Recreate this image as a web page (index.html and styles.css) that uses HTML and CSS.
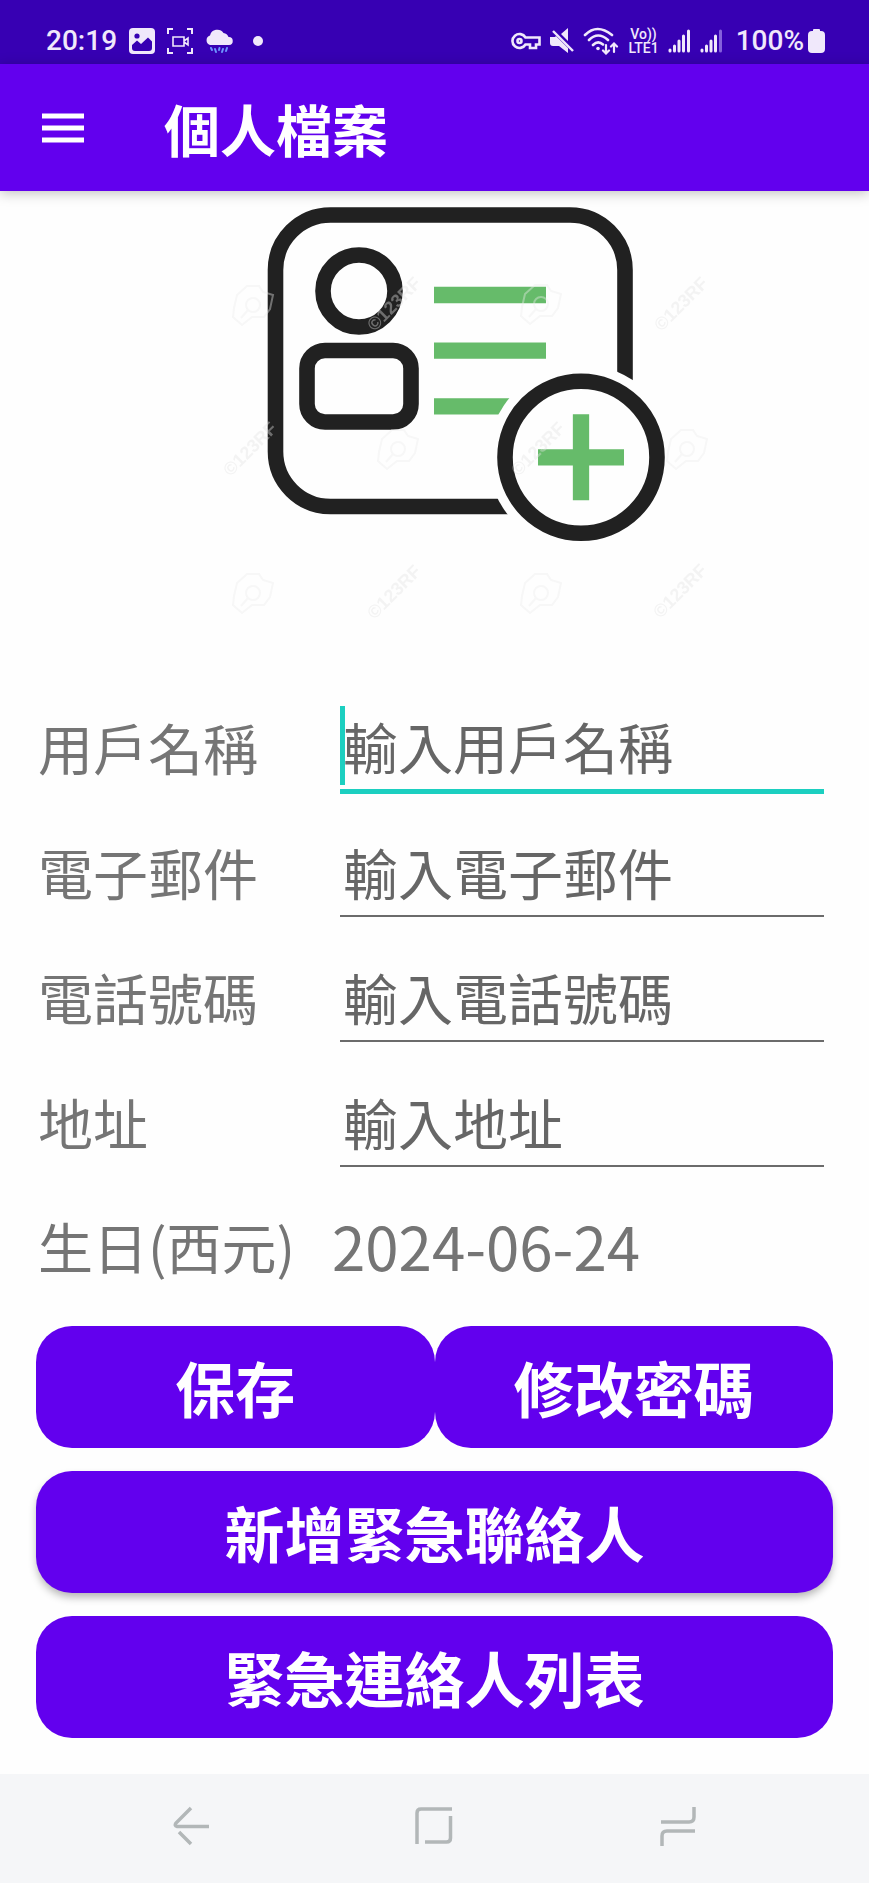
FILE: index.html
```html
<!DOCTYPE html>
<html lang="zh-Hant">
<head>
<meta charset="utf-8">
<meta name="viewport" content="width=device-width, initial-scale=1">
<title>個人檔案</title>
<link rel="stylesheet" href="styles.css">
</head>
<body>
<div class="screen">
  <div class="status">
    <div class="status-left">
      <span class="clock">20:19</span>
      <svg width="26" height="26" viewBox="0 0 26 26" aria-hidden="true"><rect width="26" height="26" rx="4" fill="#f0e8fb"/><circle cx="8" cy="8" r="2.600" fill="#3700b3"/><path d="M3 19v-2l5-4.500 4 3.500 7-6.500 4 4V20q0 3-3 3H6q-3 0-3-3z" fill="#3700b3"/></svg>
      <svg width="26" height="26" viewBox="0 0 26 26" fill="none" stroke="#f0e8fb" stroke-width="2" aria-hidden="true"><path d="M1 6V1h5M20 1h5v5M25 20v5h-5M6 25H1v-5"/><path d="M6 9h11v9H6zM17 13l4-3v7l-4-3" stroke-width="1.600"/></svg>
      <svg width="28" height="26" viewBox="0 0 28 26" aria-hidden="true"><path d="M5 17a5 5 0 0 1 0-9.500A7.500 7.500 0 0 1 18.500 5a6 6 0 0 1 5 4A4 4 0 0 1 24 17z" fill="#f0e8fb"/><path d="M6 20l1 2M10 21l1 3M14.500 20l-.5 2M18 21l-1 3M22 20l-1 3" stroke="#6d95ff" stroke-width="2" stroke-linecap="round"/></svg>
      <span class="dot"></span>
    </div>
    <div class="status-right">
      <svg width="30" height="26" viewBox="0 0 30 26" fill="none" stroke="#f0e8fb" stroke-width="2.600" aria-hidden="true"><circle cx="8.500" cy="13" r="2"/><path d="M14.500 9.500a7 7 0 1 0 0 7H19V20h6v-3.500h3.500v-7z"/></svg>
      <svg width="24" height="26" viewBox="0 0 24 26" aria-hidden="true"><path d="M0 9h5l1-1 12 12v5l-9-7H3q-3 0-3-3zM11 6l7-6v13z" fill="#f0e8fb"/><path d="M3 3l20 20" stroke="#f0e8fb" stroke-width="2.400"/></svg>
      <svg width="36" height="28" viewBox="0 0 36 28" fill="none" stroke="#f0e8fb" stroke-width="2.600" stroke-linecap="round" aria-hidden="true"><path d="M2 8q12-12 27 0M6 13q9-9 19 0M10 18q5-5 10-.5"/><circle cx="15" cy="21.500" r="1.800" fill="#f0e8fb" stroke="none"/><path d="M23 18v8M20 23.500l3 3 3-3M31 25v-8M28 19.500l3-3 3 3" stroke-width="2.200"/></svg>
      <span class="volte"><span>Vo))</span><span>LTE1</span></span>
      <svg width="23" height="26" viewBox="0 0 23 26" stroke="#f0e8fb" stroke-width="3" stroke-linecap="round" aria-hidden="true"><path d="M2 22v1M6.500 18v5M11 13v10M15.500 8v15M20.500 3v20"/></svg>
      <svg width="23" height="26" viewBox="0 0 23 26" stroke="#f0e8fb" stroke-width="3" stroke-linecap="round" aria-hidden="true"><path d="M2 22v1M6.500 18v5M11 13v10M15.500 8v15"/><path d="M20.500 3v20" stroke="#8560dc"/></svg>
      <span class="power">
        <span class="percent">100%</span>
        <svg width="17" height="26" viewBox="0 0 17 26" aria-hidden="true"><path d="M5 2q0-1 1-1h5q1 0 1 1v1h1q4 0 4 4v14q0 4-4 4H4q-4 0-4-4V7q0-4 4-4h1z" fill="#f0e8fb"/></svg>
      </span>
    </div>
  </div>

  <header class="appbar">
    <button class="menu" type="button" aria-label="選單"><svg width="42" height="30" viewBox="0 0 42 30" aria-hidden="true"><path d="M0 3h42M0 15h42M0 27h42" stroke="#fff" stroke-width="5"/></svg></button>
    <h1 class="title">個人檔案</h1>
  </header>

  <main class="content">
    <svg class="hero" viewBox="155 191 559 478" role="img" aria-label="個人檔案">
      <defs>
        <g id="camera" fill="none" stroke="#ededed" stroke-width="2"><path d="M-19 3l3-13 10-9 12 0 4 6 10 3-3 14-6 8-12 0-10 8-9-8z"/><circle r="7"/><path d="M-5 5l-7 8"/></g>
        <text id="mark" class="mark" text-anchor="middle" transform="rotate(-45)" y="6">©123RF</text>
      </defs>
      <rect x="275.500" y="215" width="349.500" height="291.500" rx="55" fill="none" stroke="#212121" stroke-width="15.600"/>
      <circle cx="359" cy="291" r="36" fill="none" stroke="#212121" stroke-width="15.600"/>
      <rect x="307" y="350.500" width="104" height="71.500" rx="18" fill="none" stroke="#212121" stroke-width="15.600"/>
      <path d="M434 295h112M434 350.700h112M434 406.300h112" stroke="#66bb6a" stroke-width="16.300"/>
      <circle cx="581" cy="457.300" r="93" fill="#fefefe"/>
      <circle cx="581" cy="457.300" r="76" fill="#fefefe" stroke="#212121" stroke-width="15.600"/>
      <path d="M538 457.300h86M581 414.300v86" stroke="#66bb6a" stroke-width="16.300"/>
      <g opacity=".4">
        <use href="#camera" x="253" y="305"/><use href="#camera" x="541" y="304"/><use href="#camera" x="398" y="449"/><use href="#camera" x="687" y="449"/><use href="#camera" x="253" y="593"/><use href="#camera" x="541" y="593"/>
        <use href="#mark" x="394" y="304"/><use href="#mark" x="681" y="304"/><use href="#mark" x="250" y="449"/><use href="#mark" x="538" y="449"/><use href="#mark" x="394" y="592"/><use href="#mark" x="680" y="591"/>
      </g>
    </svg>

    <form class="form">
      <div class="row"><label for="user">用戶名稱</label><div class="field active"><input id="user" type="text" placeholder="輸入用戶名稱"><span class="caret"></span></div></div>
      <div class="row"><label for="mail">電子郵件</label><div class="field"><input id="mail" type="email" placeholder="輸入電子郵件"></div></div>
      <div class="row"><label for="phone">電話號碼</label><div class="field"><input id="phone" type="tel" placeholder="輸入電話號碼"></div></div>
      <div class="row"><label for="address">地址</label><div class="field"><input id="address" type="text" placeholder="輸入地址"></div></div>
      <div class="row birthday"><span>生日(西元)</span><time class="date" datetime="2024-06-24">2024-06-24</time></div>
      <div class="actions">
        <div class="pair"><button class="btn" type="button">保存</button><button class="btn" type="button">修改密碼</button></div>
        <button class="btn raised" type="button">新增緊急聯絡人</button>
        <button class="btn" type="button">緊急連絡人列表</button>
      </div>
    </form>
  </main>

  <nav class="navbar">
    <button type="button" aria-label="返回"><svg width="40" height="42" viewBox="0 0 40 42" aria-hidden="true"><path d="M20 3L5 18q-2 3 1 3.500h32M8 27l12 12"/></svg></button>
    <button type="button" aria-label="主畫面"><svg width="40" height="42" viewBox="0 0 40 42" aria-hidden="true"><path d="M3 39V8q0-4 4-4h31M36.500 11v22q0 4-4 4H11"/></svg></button>
    <button type="button" aria-label="最近使用"><svg width="40" height="42" viewBox="0 0 40 42" aria-hidden="true"><path d="M3 17h28q5 0 5-5V2M37 26H9q-5 0-5 5v10"/></svg></button>
  </nav>
</div>
</body>
</html>
```

FILE: styles.css
```css
* { box-sizing: border-box; }

body {
  margin: 0;
  background: #fefefe;
  color: #757575;
  font-family: "Noto Sans CJK TC", "Noto Sans", sans-serif;
  font-size: 55px;
}

button, input { font: inherit; border: 0; margin: 0; padding: 0; }
button { background: none; cursor: pointer; }
svg { display: block; flex: none; }

.screen { min-height: 100vh; display: flex; flex-direction: column; }

.status {
  height: 64px;
  padding: 18px 44px 0 46px;
  display: flex;
  justify-content: space-between;
  align-items: center;
  background: #3700b3;
  color: #f0e8fb;
  font-family: Roboto, sans-serif;
}
.status-left, .status-right, .power { display: flex; align-items: center; }
.status-left { gap: 12px; }
.status-right { gap: 9px; }
.power { gap: 4px; margin-left: 4px; }
.clock, .percent { font-size: 28px; font-weight: 500; line-height: 32px; }
.dot { width: 10px; height: 10px; margin-left: 8px; border-radius: 50%; background: #f0e8fb; }
.volte {
  display: flex;
  flex-direction: column;
  align-items: center;
  font-size: 14px;
  font-weight: 500;
  line-height: 14px;
}

.appbar {
  height: 127px;
  padding: 0 42px;
  display: flex;
  align-items: center;
  gap: 80px;
  background: #6200ee;
  box-shadow: 0 2px 12px rgba(0, 0, 0, .25);
}
.title { margin: 0; color: #fff; font-size: 56px; font-weight: 700; line-height: 80px; }

.content { flex: 1; }
.hero { width: 559px; max-width: 100%; margin: 0 auto; }
.mark { font-family: "Liberation Sans", sans-serif; font-size: 18px; font-weight: 700; fill: #e4e4e4; }

.row {
  height: 125px;
  padding: 0 45px 0 38px;
  display: grid;
  grid-template-columns: 302px 1fr;
  align-items: end;
}
.row label { line-height: 80px; margin-bottom: 8px; }
.field { position: relative; margin-bottom: 2px; border-bottom: 2px solid #6b6b6b; }
.field.active { margin-bottom: 0; border-bottom: 5px solid #1ccfc0; }
.field input {
  display: block;
  width: 100%;
  height: 84px;
  padding: 0 0 4px 3px;
  background: none;
  outline: 0;
  color: #666;
}
.field input::placeholder { color: #666; opacity: 1; }
.caret { position: absolute; left: 0; bottom: 4px; width: 5px; height: 79px; background: #1ccfc0; }

.birthday {
  height: 157px;
  padding-bottom: 6px;
  grid-template-columns: 294px 1fr;
  align-items: center;
  line-height: 80px;
}
.date { font-size: 60px; }

.actions { padding: 0 36px 36px; display: flex; flex-direction: column; gap: 23px; }
.pair { display: grid; grid-template-columns: 1fr 1fr; }
.btn {
  width: 100%;
  height: 122px;
  border-radius: 36px;
  background: #6200ee;
  color: #fff;
  font-size: 60px;
  font-weight: 700;
  line-height: 80px;
}
.raised { box-shadow: 0 5px 8px -1px rgba(0, 0, 0, .3); }

.navbar {
  height: 109px;
  padding: 0 69px;
  display: grid;
  grid-template-columns: repeat(3, 1fr);
  background: #f5f6f8;
}
.navbar button { display: flex; align-items: center; justify-content: center; padding-bottom: 6px; }
.navbar path { fill: none; stroke: #b2b7b8; stroke-width: 3.5; }
```
